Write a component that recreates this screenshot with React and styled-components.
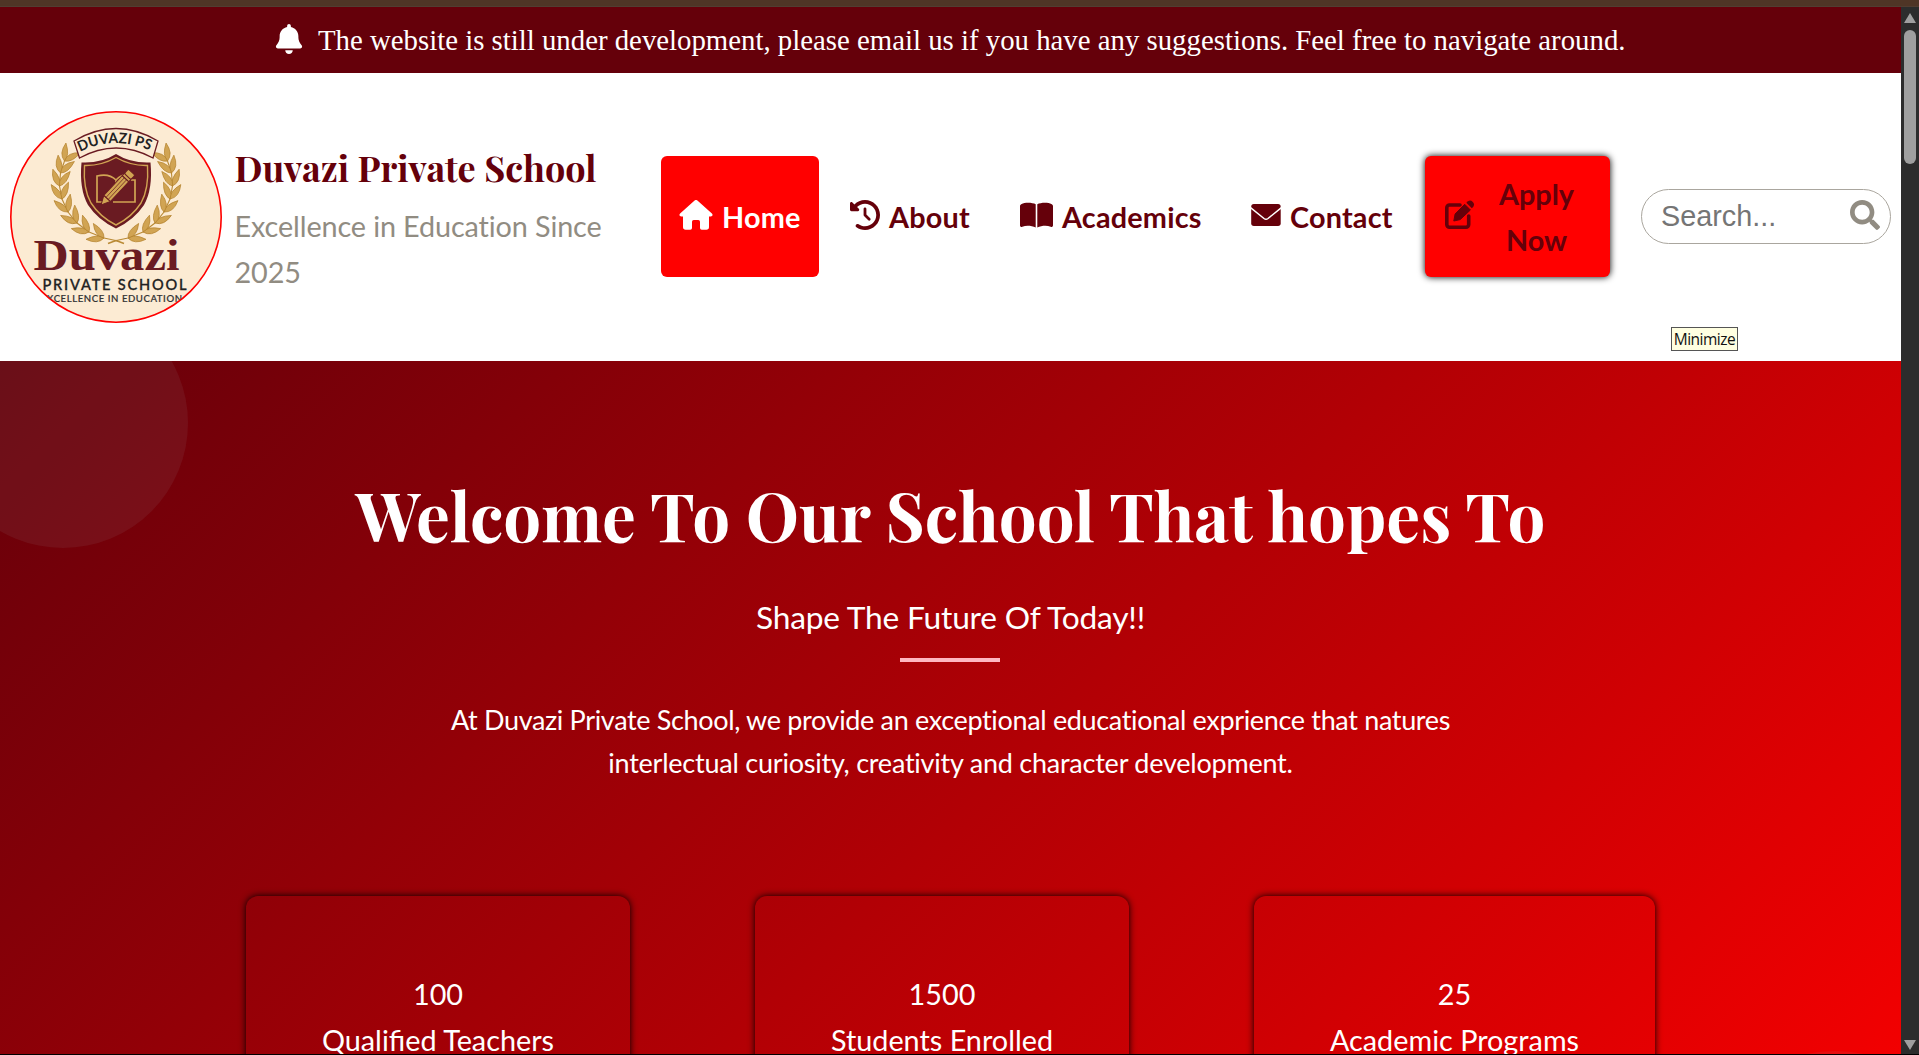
import React from 'react';
import styled, { createGlobalStyle } from 'styled-components';
import { FaBell, FaClockRotateLeft } from 'react-icons/fa6';
import { FaSearch } from 'react-icons/fa';

const Global = createGlobalStyle`
  * { box-sizing: border-box; }
  body { margin: 0; background: #fff; font-family: Lato, sans-serif; font-size: 28.8px; line-height: 46px; overflow: hidden; }
  h1, h2, p { margin: 0; }
  svg { display: block; flex: none; }
`;
const Window = styled.div`height: 1055px; display: flex; flex-direction: column; background: #000; overflow: hidden;`;
const Strip = styled.div`height: 7px; flex: none; background: #4f3526; border-bottom: 1px solid #513d31;`;
const Body = styled.div`display: flex; height: 1047px; flex: none;`;
const Page = styled.div`width: 1901px; display: flex; flex-direction: column; overflow: hidden;`;
const Banner = styled.div`
  height: 66px; flex: none; background: #65000a; color: #fff; display: flex; align-items: center;
  padding-left: 274px; gap: 14px;
  font: 28.8px/46px 'Liberation Serif', serif; white-space: nowrap;
  svg { margin-top: -3px; }
`;
const Header = styled.header`height: 288px; flex: none; background: #fff; display: flex; align-items: center; padding-left: 10px;`;
const Brand = styled.div`display: flex; align-items: center; width: 651px; gap: 12.5px;`;
const BrandText = styled.div`color: #918c82; letter-spacing: -.12px; white-space: nowrap;`;
const BrandName = styled.h1`
  font: 700 36px/56px 'Playfair Display', 'Liberation Serif', serif; color: #65000a; letter-spacing: 0; margin: -1px 0 8px;
`;
const Nav = styled.nav`display: flex; align-items: center; margin-top: -1px;`;
const Item = styled.a`
  display: flex; align-items: center; gap: 9px; height: 121px; width: ${p => p.$w}px; padding: 1px 0 0 18px;
  margin-right: ${p => p.$mr || 0}px; font-weight: 700; color: ${p => (p.$active ? '#fff' : '#65000a')};
  background: ${p => (p.$active ? '#f00' : 'transparent')}; border-radius: 6px; white-space: nowrap; letter-spacing: .2px;
  svg { margin-top: -4px; }
`;
const Apply = styled.button`
  display: flex; align-items: center; gap: 24px; width: 185px; height: 121px; border: 0; border-radius: 6px; padding: 1px 0 0 20px;
  background: #f00; color: #65000a; box-shadow: 0 0 7px #000; font: 700 28.8px/46px Lato, sans-serif; text-align: center;
  svg { margin-top: -4px; }
`;
const Search = styled.label`
  display: flex; align-items: center; justify-content: space-between; width: 250px; height: 55px; margin: -1px 0 0 31px;
  border: 1px solid #aaa69e; border-radius: 28px; padding: 0 10px 0 19px; color: #757575;
  font: 28.8px 'Liberation Sans', sans-serif;
  svg { margin-top: -3px; }
`;
const Hero = styled.main`
  position: relative; height: 693px; overflow: hidden; color: #fff; text-align: center;
  display: flex; flex-direction: column; align-items: center; flex: none;
  background: linear-gradient(135deg, #65000a 0%, #f00 100%) 0 0 / 1901px 925px no-repeat;
  > * { flex: none; }
`;
const Bubble = styled.div`
  position: absolute; left: ${p => p.$x}px; top: ${p => p.$y}px; width: ${p => p.$d}px; height: ${p => p.$d}px;
  border-radius: 50%; background: rgba(160,150,160,.1);
`;
const Title = styled.h2`
  margin-top: 105px; font: 700 67.2px/96px 'Playfair Display', 'Liberation Serif', serif; white-space: nowrap;
`;
const Tagline = styled.p`margin-top: 30px; font-size: 31.7px; line-height: 50px; white-space: nowrap; letter-spacing: -.2px;`;
const Rule = styled.div`width: 100px; height: 4px; margin: 16px 1px 0 0; background: #ffb6c1;`;
const Lead = styled.p`margin-top: 36px; font-size: 27px; line-height: 43px; white-space: nowrap; letter-spacing: -.34px;`;
const LeadEnd = styled.span`letter-spacing: -.23px;`;
const Stats = styled.div`display: flex; width: 1409px; gap: 125px; margin-top: 112px;`;
const Card = styled.div`
  width: ${p => p.$w}px; height: 260px; padding-top: 75px; border-radius: 12px; box-shadow: 0 0 7px #000;
`;
const Scroll = styled.div`
  width: 18px; background: #2c2c2c; display: flex; flex-direction: column; align-items: center; justify-content: space-between; padding: 6px 0 4px;
`;
const Thumb = styled.div`width: 12px; height: 134px; border-radius: 6px; background: #9f9f9f; margin-top: 7px;`;
const Group = styled.div`display: flex; flex-direction: column; align-items: center;`;
const Tip = styled.div`
  position: absolute; left: 1671px; top: 327px; width: 67px; height: 24px; border: 1px solid #555; background: #ffffe1; color: #111;
  font: 15.5px/23px 'Open Sans', sans-serif; text-align: center; letter-spacing: -.5px;
`;

const HouseIcon = () => (
  <svg width="34" height="30" viewBox="0 0 34 30" fill="currentColor">
    <path d="M15.6.6a2 2 0 0 1 2.8 0L32.9 13.4c1.3 1.3.5 3.2-1.3 3.2H30V27a2.7 2.7 0 0 1-2.7 2.7h-4.6A1.7 1.7 0 0 1 21 28v-6.3a1.7 1.7 0 0 0-1.7-1.7h-4.6a1.7 1.7 0 0 0-1.7 1.7V28a1.7 1.7 0 0 1-1.7 1.7H6.7A2.7 2.7 0 0 1 4 27V16.6H2.4c-1.8 0-2.6-1.9-1.3-3.2Z" />
  </svg>
);
const BookIcon = () => (
  <svg width="33" height="26" viewBox="0 0 33 26" fill="currentColor">
    <path d="M15.7 2.2C12.5 .4 5 .1 1.6 1.9 .5 2.400 0 3 0 4.2V23.2C0 24.7 1 25.3 2.3 24.7 6 23.4 11.5 23.5 15.7 25.6ZM17.3 2.2C20.5 .4 28 .1 31.4 1.9 32.5 2.4 33 3 33 4.2V23.2C33 24.7 32 25.3 30.7 24.7 27 23.4 21.5 23.5 17.3 25.6Z" />
  </svg>
);
const MailIcon = () => (
  <svg width="30" height="22" viewBox="0 0 30 22">
    <rect width="29.5" height="22" x=".2" rx="2.7" fill="currentColor" />
    <path d="M-.5 3.6L13 14.5Q15 16 17 14.5L30.5 3.6" fill="none" stroke="#fff" strokeWidth="1.5" />
  </svg>
);
const EditIcon = () => (
  <svg width="30" height="30" viewBox="0 0 30 30">
    <path d="M15 5H4.5A2.7 2.7 0 0 0 1.8 7.7V24.5A2.7 2.7 0 0 0 4.5 27.2H21A2.7 2.7 0 0 0 23.7 24.5V16" fill="none" stroke="currentColor" strokeWidth="3.6" strokeLinecap="round" />
    <path d="M19.7 4.3L25.4 10L15.2 19.6L8.8 21L10.1 14Z" fill="currentColor" stroke="currentColor" strokeWidth="1" strokeLinejoin="round" />
    <path d="M21.3 2.7L23 1.2Q25.5-.4 27.8 1.9Q30 4.3 28.3 6.7L26.8 8.3Z" fill="currentColor" />
  </svg>
);

const STEM = [[108, 130], [94, 127], [79, 121], [67, 112], [58, 101], [52, 88], [49.5, 75], [50.5, 62], [54.500, 50], [61, 39]];

function Wreath({ flip }) {
  const leaves = STEM.slice(1).map(([x, y], i) => {
    const [px, py] = STEM[i];
    return [px, py, (Math.atan2(y - py, x - px) * 180) / Math.PI];
  }).slice(1);
  return (
    <g transform={flip ? 'translate(212 0) scale(-1 1)' : undefined}>
      <polyline points={STEM.slice(0, 9).map(p => p.join()).join(' ')} fill="none" stroke="#b98a35" strokeWidth="1.1" />
      <path d="M106 129.5L114 132.500" stroke="#b98a35" strokeWidth="1.5" />
      {leaves.map(([x, y, a], i) => [-26, 32].map(o => (
        <path key={`${i}${o}`} d="M0 0Q7-6.5 18 0Q6 5 0 0Z" fill="#d1a453" stroke="#b4822d" strokeWidth=".7" transform={`translate(${x} ${y}) rotate(${a + o})`} />
      )))}
    </g>
  );
}

function Crest() {
  return (
    <svg width="212" height="212" viewBox="0 0 212 212">
      <defs>
        <clipPath id="disc"><circle cx="106" cy="106" r="104.5" /></clipPath>
        <path id="arc" d="M70 41Q106 23 144 41.5" />
      </defs>
      <circle cx="106" cy="106" r="105.2" fill="#fcebd3" stroke="#f00" strokeWidth="1.6" />
      <Wreath />
      <Wreath flip />
      <path d="M64 30Q106 5 148 30L143 47Q106 27 69.5 47Z" fill="#fcebd3" stroke="#6a1b22" strokeWidth="1.3" />
      <text fontFamily="Lato" fontWeight="700" fontSize="14.5" fill="#222"><textPath href="#arc" textLength="72" lengthAdjust="spacingAndGlyphs">DUVAZI PS</textPath></text>
      <path d="M106 43Q91 52.5 71.5 51.5Q69 78 78 94Q88 109 106 117.5Q124 109 134 94Q143 78 140.5 51.5Q121 52.5 106 43Z" fill="#6a1b22" />
      <path d="M106 46.5Q91 55 74.5 54.5Q73 78 81 92Q90 106 106 114Q122 106 131 92Q139 78 137.5 54.5Q121 55 106 46.5Z" fill="none" stroke="#d1a453" strokeWidth="1.4" />
      <path d="M94 91H87V65Q99 62 106 69Q112 63 118 64M121 69H125V91H103M106 69V76" fill="none" stroke="#d1a453" strokeWidth="1.7" />
      <g transform="translate(91 94) rotate(-47)" fill="#d1a453" stroke="#6a1b22" strokeWidth="1">
        <path d="M0 0L9-4.5V4.5Z" /><path d="M9-4.5H36V4.5H9Z" /><path d="M36-4.5H39V4.5H36Z" /><rect x="39" y="-4.5" width="6" height="9" rx="1.5" />
        <path d="M9-1.5H36M9 1.5H36" strokeWidth=".7" />
      </g>
      <text x="23.500" y="159" fontFamily="Liberation Serif" fontWeight="700" fontSize="45" fill="#6a1b22" textLength="146" lengthAdjust="spacingAndGlyphs">Duvazi</text>
      <text x="32.5" y="178.500" fontFamily="Lato" fontWeight="500" fontSize="14.6" fill="#222" stroke="#222" strokeWidth=".3" textLength="144">PRIVATE SCHOOL</text>
      <g clipPath="url(#disc)"><text x="31" y="190.500" fontFamily="Lato" fontWeight="500" fontSize="9.6" fill="#333" stroke="#333" strokeWidth=".2" textLength="141">EXCELLENCE IN EDUCATION</text></g>
    </svg>
  );
}

export default function App() {
  return (
    <Window>
      <Global />
      <Strip />
      <Body>
        <Page>
          <Banner><FaBell size={30} /><span>The website is still under development, please email us if you have any suggestions. Feel free to navigate around.</span></Banner>
          <Header>
            <Brand><Crest /><BrandText><BrandName>Duvazi Private School</BrandName>Excellence in Education Since<br />2025</BrandText></Brand>
            <Nav>
              <Item $active $w={158} $mr={13}><HouseIcon />Home</Item>
              <Item $w={157} $mr={13}><FaClockRotateLeft size={30} />About</Item>
              <Item $w={219} $mr={12}><BookIcon />Academics</Item>
              <Item $w={179} $mr={13}><MailIcon />Contact</Item>
              <Apply><EditIcon /><span>Apply<br />Now</span></Apply>
            </Nav>
            <Search>Search...<FaSearch size={30} color="#918c82" /></Search>
          </Header>
          <Hero>
            <Bubble $x={-62} $y={-63} $d={250} />
            <Bubble $x={1685} $y={690} $d={300} />
            <Title>Welcome To Our School That hopes To</Title>
            <Tagline>Shape The Future Of Today!!</Tagline>
            <Rule />
            <Lead>At Duvazi Private School, we provide an exceptional educational exprience that natures<br /><LeadEnd>interlectual curiosity, creativity and character development.</LeadEnd></Lead>
            <Stats>
              <Card $w={384}>100<br />Qualified Teachers</Card>
              <Card $w={374}>1500<br />Students Enrolled</Card>
              <Card $w={401}>25<br />Academic Programs</Card>
            </Stats>
          </Hero>
        </Page>
        <Scroll>
          <Group><svg width="12" height="10"><path d="M6 0L12 10H0Z" fill="#9f9f9f" /></svg><Thumb /></Group>
          <svg width="12" height="10"><path d="M0 0H12L6 10Z" fill="#9f9f9f" /></svg>
        </Scroll>
      </Body>
      <Tip>Minimize</Tip>
    </Window>
  );
}
